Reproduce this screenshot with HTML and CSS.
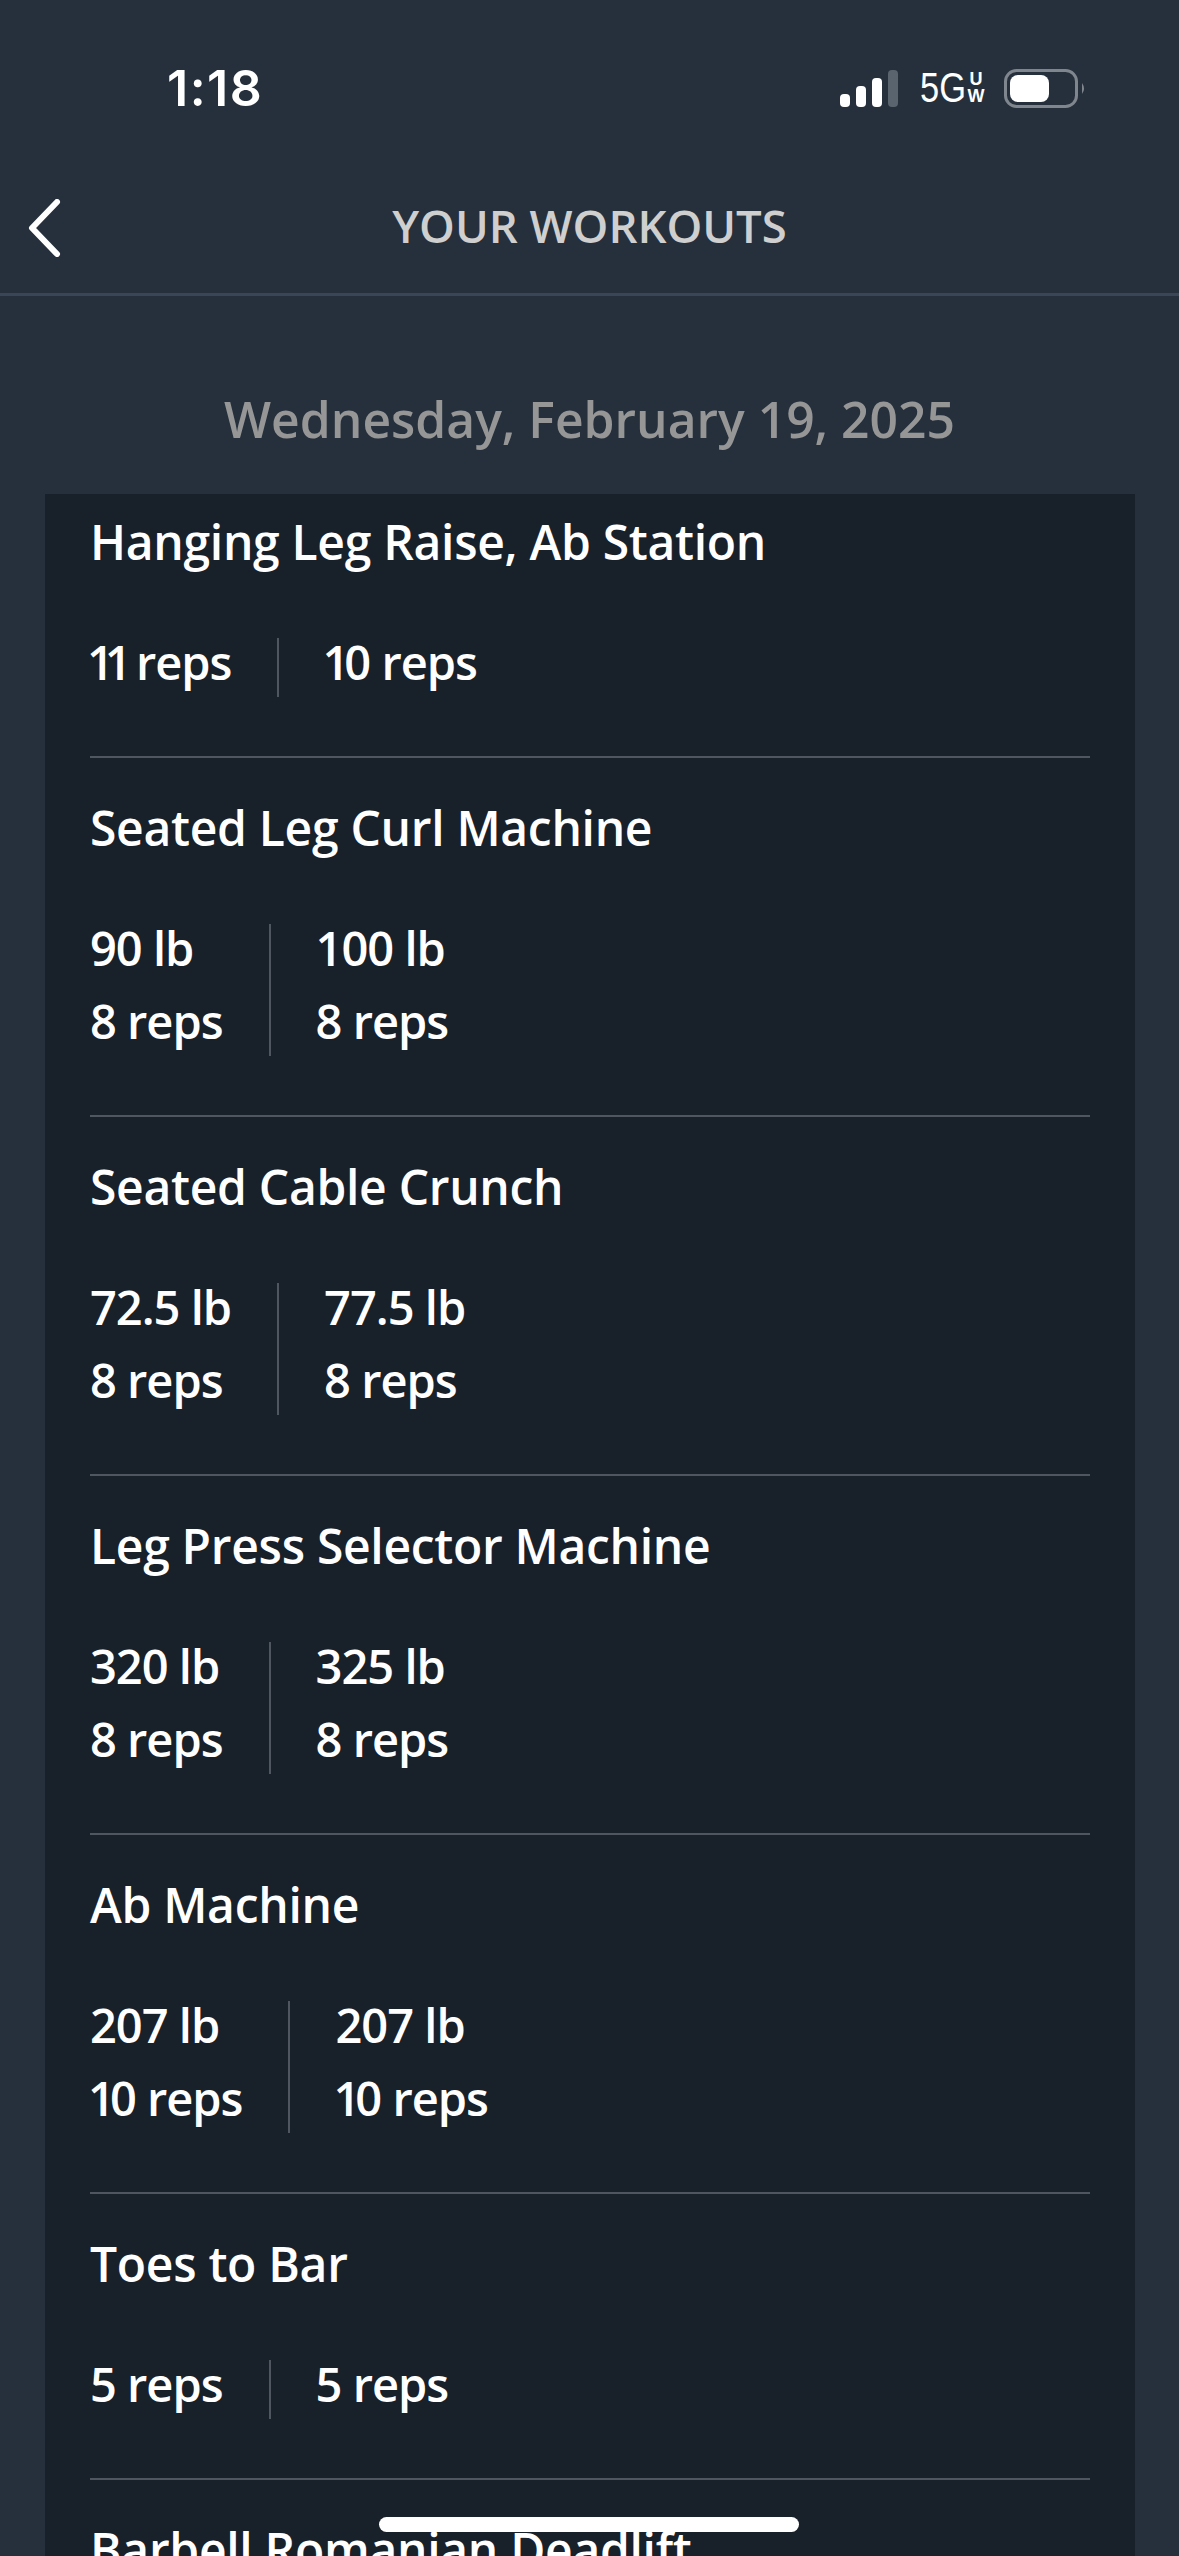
FILE: index.html
```html
<!DOCTYPE html>
<html lang="en">
<head>
<meta charset="utf-8">
<title>Your Workouts</title>
<link rel="stylesheet" href="styles.css">
</head>
<body>
<div class="screen">
  <header class="status">
    <span class="time">1:18</span>
    <div class="status-right">
      <svg class="signal" viewBox="0 0 58 37" aria-hidden="true">
        <rect x="0" y="24" width="10" height="13" rx="4" fill="#fff"/>
        <rect x="16" y="16" width="10" height="21" rx="4" fill="#fff"/>
        <rect x="32" y="8" width="10" height="29" rx="4" fill="#fff"/>
        <rect x="48" y="0" width="10" height="37" rx="4" fill="#5a646e"/>
      </svg>
      <span class="net"><span class="net-main">5G</span><span class="net-sub"><span>U</span><span>W</span></span></span>
      <svg class="battery" viewBox="0 0 82 39" aria-hidden="true">
        <rect x="1.5" y="1.5" width="71" height="36" rx="11" fill="none" stroke="#80868d" stroke-width="3"/>
        <rect x="6" y="6" width="39" height="27" rx="8" fill="#fff"/>
        <path d="M78 14 Q82 19.5 78 25 Z" fill="#80868d"/>
      </svg>
    </div>
  </header>
  <nav class="nav">
    <svg class="back" viewBox="0 0 34 58" aria-hidden="true"><path d="M30 3 L5 29 L30 55" fill="none" stroke="#fff" stroke-width="6" stroke-linecap="round" stroke-linejoin="round"/></svg>
    <h1 class="nav-title">YOUR WORKOUTS</h1>
  </nav>
  <h2 class="date">Wednesday, February 19, 2025</h2>
  <main class="card">
    <section class="item first">
      <h3 class="name">Hanging Leg Raise, Ab Station</h3>
      <div class="sets"><div class="set"><span class="val"><span class="kern-11">11</span> reps</span></div><div class="set"><span class="val"><span class="kern-1">1</span>0 reps</span></div></div>
    </section>
    <section class="item">
      <h3 class="name">Seated Leg Curl Machine</h3>
      <div class="sets"><div class="set"><span class="val">90 lb</span><span class="val">8 reps</span></div><div class="set"><span class="val">100 lb</span><span class="val">8 reps</span></div></div>
    </section>
    <section class="item">
      <h3 class="name">Seated Cable Crunch</h3>
      <div class="sets"><div class="set"><span class="val">72.5 lb</span><span class="val">8 reps</span></div><div class="set"><span class="val">77.5 lb</span><span class="val">8 reps</span></div></div>
    </section>
    <section class="item">
      <h3 class="name">Leg Press Selector Machine</h3>
      <div class="sets"><div class="set"><span class="val">320 lb</span><span class="val">8 reps</span></div><div class="set"><span class="val">325 lb</span><span class="val">8 reps</span></div></div>
    </section>
    <section class="item">
      <h3 class="name">Ab Machine</h3>
      <div class="sets"><div class="set"><span class="val">207 lb</span><span class="val"><span class="kern-1">1</span>0 reps</span></div><div class="set"><span class="val">207 lb</span><span class="val"><span class="kern-1">1</span>0 reps</span></div></div>
    </section>
    <section class="item">
      <h3 class="name">Toes to Bar</h3>
      <div class="sets"><div class="set"><span class="val">5 reps</span></div><div class="set"><span class="val">5 reps</span></div></div>
    </section>
    <section class="item">
      <h3 class="name">Barbell Romanian Deadlift</h3>
    </section>
  </main>
  <div class="home-bar"></div>
</div>
</body>
</html>
```

FILE: styles.css
```css
* { box-sizing: border-box; margin: 0; padding: 0; }
html, body { width: 1179px; height: 2556px; overflow: hidden; background: #26303c; }
.screen { position: relative; width: 1179px; height: 2556px; overflow: hidden; background: #26303c; font-family: "Open Sans", "Noto Sans", sans-serif; color: #fff; }
.status { height: 160px; padding: 58px 93px 0 167px; display: flex; justify-content: space-between; align-items: flex-start; }
.time { font-family: Inter, sans-serif; font-weight: 600; font-size: 50px; line-height: 60px; letter-spacing: 1.5px; }
.status-right { display: flex; align-items: center; height: 60px; }
.signal { width: 58px; height: 37px; }
.net { display: flex; align-items: center; margin-left: 22px; font-family: "Liberation Sans", sans-serif; }
.net-main { width: 46px; margin-right: 3px; font-size: 42px; line-height: 40px; transform: scaleX(.82); transform-origin: left center; white-space: nowrap; }
.net-sub { display: flex; flex-direction: column; align-items: center; width: 14px; font-size: 18px; line-height: 17px; font-weight: 700; }
.battery { width: 82px; height: 39px; margin-left: 21px; }
.nav { position: relative; height: 136px; border-bottom: 3px solid #3a4656; display: flex; align-items: center; justify-content: center; }
.back { position: absolute; left: 27px; top: 39px; width: 34px; height: 58px; }
.nav-title { font-size: 45.5px; font-weight: 550; color: #cfcfcf; line-height: 56px; padding-bottom: 4px; }
.date { text-align: center; font-size: 49.8px; font-weight: 550; line-height: 68px; color: #969696; margin-top: 89px; height: 109px; }
.card { margin: 0 44px 0 45px; background: #18202a; padding: 0 45px; }
.item { border-top: 2px solid #50565f; padding-top: 40px; padding-bottom: 59px; }
.item.first { border-top: 0; padding-top: 18px; }
.name { font-size: 48px; font-weight: 550; line-height: 60px; letter-spacing: -.3px; white-space: nowrap; }
.sets { display: flex; margin-top: 66px; }
.set { display: flex; flex-direction: column; gap: 14px; padding-right: 46px; }
.set + .set { border-left: 2px solid #50565f; padding-left: 45px; }
.val { display: block; height: 59px; font-size: 47px; font-weight: 550; letter-spacing: -1px; line-height: 49px; white-space: nowrap; }
.kern-11 { letter-spacing: -9px; margin-left: -3px; margin-right: 2px; }
.kern-1 { letter-spacing: -5px; margin-left: -2px; }
.home-bar { position: absolute; left: 379px; top: 2517px; width: 420px; height: 15px; border-radius: 8px; background: #fff; }
```
